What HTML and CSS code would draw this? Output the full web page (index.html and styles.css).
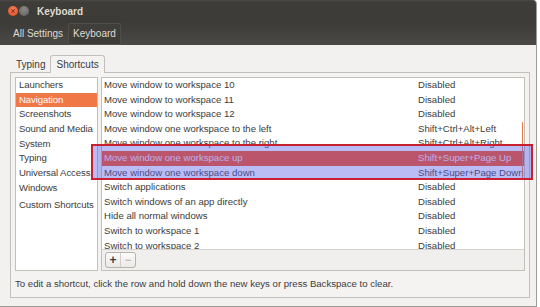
FILE: index.html
```html
<!DOCTYPE html>
<html lang="en">
  <head>
    <meta charset="UTF-8" />
    <title>Keyboard</title>
    <link rel="stylesheet" href="styles.css">
  </head>
  <body>
    <div class="window">
      <header class="titlebar">
        <span class="wm-btn close">&#215;</span>
        <span class="wm-btn min"></span>
        <span class="title">Keyboard</span>
      </header>
      <nav class="toolbar">
        <span class="crumb">All Settings</span>
        <span class="crumb active">Keyboard</span>
      </nav>

      <main class="content">
        <div class="tabs">
          <span class="tab">Typing</span>
          <span class="tab active">Shortcuts</span>
        </div>

        <section class="page">
          <div class="panes">
            <ul class="sections">
              <li>Launchers</li>
              <li class="selected">Navigation</li>
              <li>Screenshots</li>
              <li>Sound and Media</li>
              <li>System</li>
              <li>Typing</li>
              <li>Universal Access</li>
              <li>Windows</li>
              <li class="custom">Custom Shortcuts</li>
            </ul>

            <div class="shortcuts">
              <div class="list">
                <div class="row"><span class="name">Move window to workspace 10</span><span class="keys">Disabled</span></div>
                <div class="row"><span class="name">Move window to workspace 11</span><span class="keys">Disabled</span></div>
                <div class="row"><span class="name">Move window to workspace 12</span><span class="keys">Disabled</span></div>
                <div class="row"><span class="name">Move window one workspace to the left</span><span class="keys">Shift+Ctrl+Alt+Left</span></div>
                <div class="row"><span class="name">Move window one workspace to the right</span><span class="keys">Shift+Ctrl+Alt+Right</span></div>
                <div class="row selected"><span class="name">Move window one workspace up</span><span class="keys">Shift+Super+Page Up</span></div>
                <div class="row"><span class="name">Move window one workspace down</span><span class="keys">Shift+Super+Page Down</span></div>
                <div class="row"><span class="name">Switch applications</span><span class="keys">Disabled</span></div>
                <div class="row"><span class="name">Switch windows of an app directly</span><span class="keys">Disabled</span></div>
                <div class="row"><span class="name">Hide all normal windows</span><span class="keys">Disabled</span></div>
                <div class="row"><span class="name">Switch to workspace 1</span><span class="keys">Disabled</span></div>
                <div class="row"><span class="name">Switch to workspace 2</span><span class="keys">Disabled</span></div>
                <div class="scrollbar"></div>
              </div>
              <div class="list-toolbar">
                <div class="button-group">
                  <span class="tb-btn">+</span>
                  <span class="tb-btn insensitive">&#8722;</span>
                </div>
              </div>
            </div>
          </div>
          <p class="hint">To edit a shortcut, click the row and hold down the new keys or press Backspace to clear.</p>
        </section>
      </main>
    </div>

    <!-- red annotation drawn over the screenshot -->
    <div class="annotation"></div>
  </body>
</html>
```

FILE: styles.css
```css
html, body {
  margin: 0;
  height: 100%;
}

body {
  width: 540px;
  height: 307px;
  overflow: hidden;
  position: relative;
  background-color: #ffffff;
  font-family: "Liberation Sans", Arial, sans-serif;
  font-size: 9.6px;
  color: #3c3c3c;
}

.window {
  width: 536px;
  height: 306px;
  border-right: 1px solid #9c9a96;
  border-bottom: 1px solid #9c9a96;
  border-top-right-radius: 4px;
  background-color: #f2f1f0;
  display: flex;
  flex-direction: column;
  overflow: hidden;
}

.titlebar {
  height: 22px;
  display: flex;
  align-items: center;
  padding-left: 8px;
  background: linear-gradient(#4a4945 0px, #3e3d39 2px, #3c3b37 100%);
  color: #dfdbd2;
}

.wm-btn {
  width: 10px;
  height: 10px;
  border-radius: 50%;
  margin-right: 1px;
  display: flex;
  align-items: center;
  justify-content: center;
  font-size: 9px;
  line-height: 1;
  color: #6b2410;
}

.wm-btn.close {
  background: radial-gradient(circle at 50% 35%, #f7805a, #e2461c);
}

.wm-btn.min {
  background: radial-gradient(circle at 50% 35%, #8a8984, #5f5e5a);
}

.title {
  margin-left: 7px;
  font-weight: bold;
  font-size: 10px;
}

.toolbar {
  height: 23px;
  display: flex;
  align-items: center;
  padding-left: 8px;
  background: linear-gradient(#3c3b37, #4a4945);
  color: #dfdbd2;
}

.crumb {
  height: 20px;
  display: flex;
  align-items: center;
  padding: 0 4px;
  font-size: 10px;
  border: 1px solid transparent;
  border-radius: 2px;
}

.crumb.active {
  border-color: #4f4e4a #4f4e4a #55544f;
  background: linear-gradient(#403f3b, #3d3c38);
}

.content {
  flex: 1;
  padding: 10px 7px 0 10px;
  display: flex;
  flex-direction: column;
}

.tabs {
  height: 17px;
  display: flex;
  align-items: flex-end;
  padding-left: 1px;
}

.tab {
  height: 16px;
  display: flex;
  align-items: center;
  padding: 0 5px;
  font-size: 10px;
}

.tab.active {
  height: 17px;
  margin-bottom: -1px;
  position: relative;
  border: 1px solid #c3c0bb;
  border-bottom: none;
  border-radius: 3px 3px 0 0;
  background-color: #f4f3f2;
}

.page {
  width: 510px;
  height: 216px;
  padding: 4px;
  border: 1px solid #c3c0bb;
  background-color: #f4f3f2;
  display: flex;
  flex-direction: column;
}

.panes {
  height: 194px;
  display: flex;
  gap: 3px;
}

.sections {
  width: 81px;
  margin: 0;
  padding: 0;
  list-style: none;
  border: 1px solid #c3c0bb;
  background-color: #ffffff;
}

.sections li {
  height: 14.7px;
  line-height: 14.7px;
  padding-left: 3px;
  white-space: nowrap;
  letter-spacing: -0.1px;
}

.sections li.selected {
  background-color: #f07746;
  color: #ffffff;
}

.sections li.custom {
  margin-top: 2px;
}

.shortcuts {
  flex: 1;
  display: flex;
  flex-direction: column;
  border: 1px solid #c3c0bb;
}

.list {
  height: 171px;
  overflow: hidden;
  position: relative;
  background-color: #ffffff;
  border-bottom: 1px solid #d6d3cf;
}

.row {
  height: 14.6px;
  line-height: 14.6px;
  display: flex;
  white-space: nowrap;
}

.row .name {
  width: 314px;
  padding-left: 2px;
}

.row.selected {
  background-color: #ff4f14;
  color: #ffe6ee;
}

.scrollbar {
  position: absolute;
  right: 1px;
  top: 44px;
  width: 1.5px;
  height: 58px;
  background-color: #e87a4a;
}

.list-toolbar {
  flex: 1;
  display: flex;
  align-items: center;
  padding-left: 3px;
  background-color: #f0efee;
}

.button-group {
  display: flex;
  border: 1px solid #b6b2ac;
  border-radius: 3px;
  background: linear-gradient(#fbfbfa, #ebe9e7);
  overflow: hidden;
}

.tb-btn {
  width: 14px;
  height: 14px;
  display: flex;
  align-items: center;
  justify-content: center;
  font-size: 12px;
  font-weight: bold;
  color: #3c3c3c;
}

.tb-btn.insensitive {
  border-left: 1px solid #d2cfca;
  font-weight: normal;
  color: #aeaaa4;
}

.hint {
  margin: 7px 0 0 0;
  padding-left: 0;
  line-height: 12px;
}

.annotation {
  position: absolute;
  left: 91px;
  top: 144px;
  width: 438px;
  height: 32px;
  border: 2px solid #c8202f;
  background-color: rgba(90, 95, 230, 0.42);
}
```
